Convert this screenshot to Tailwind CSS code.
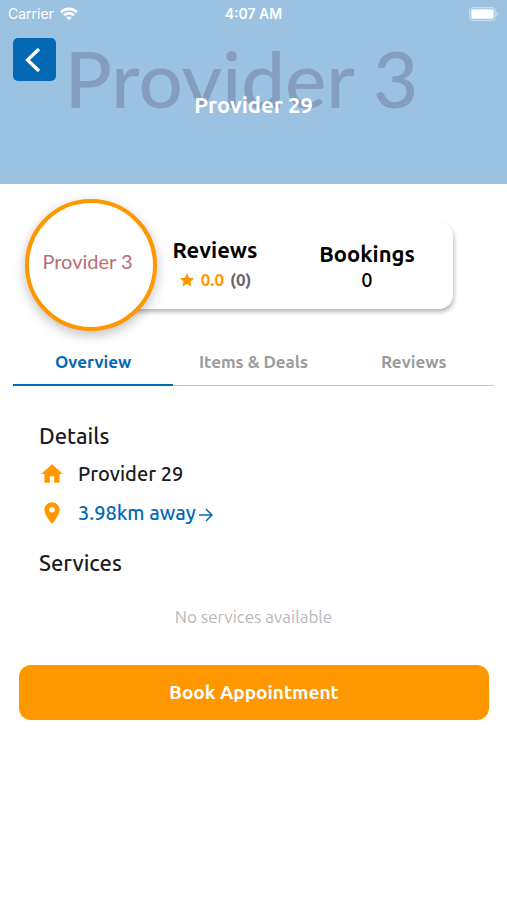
<!DOCTYPE html>
<html lang="en">
<head>
<meta charset="utf-8">
<meta name="viewport" content="width=device-width, initial-scale=1">
<title>Provider 29</title>
<script src="https://cdn.jsdelivr.net/npm/@tailwindcss/browser@4"></script>
</head>
<body class="min-h-screen bg-white font-['Ubuntu','Noto_Sans',sans-serif] text-[#1c1c1e]">
<header class="relative h-[184px] overflow-hidden bg-[#9bc2e1] text-white">
  <div aria-hidden="true" class="absolute inset-x-0 top-8 pr-6 text-center font-['Lato',sans-serif] text-[78px] leading-[92px] font-medium whitespace-nowrap text-[#859dbf]">Provider 3</div>
  <div class="relative grid h-7 grid-cols-3 items-center px-2 font-['Inter',sans-serif] text-sm">
    <div class="flex items-center gap-[6px]">
      <span>Carrier</span>
      <svg class="h-[14px] w-[18px]" viewBox="0 0 18 14" fill="none" stroke="currentColor" stroke-width="2.800" aria-hidden="true">
        <path d="M1 5.200C5.600.8 12.400.8 17 5.200"/>
        <path d="M4 8.300c2.900-2.700 7.100-2.700 10 0"/>
        <path d="M6.300 10.400c1.600-1.300 3.800-1.300 5.400 0L9 13.300z" fill="currentColor" stroke="none"/>
      </svg>
    </div>
    <span class="text-center font-semibold">4:07 AM</span>
    <svg class="h-[14px] w-[30px] justify-self-end" viewBox="0 0 30 14" aria-hidden="true">
      <rect x=".7" y=".7" width="25.600" height="12.600" rx="3.600" fill="none" stroke="#fff" stroke-opacity=".45" stroke-width="1.200"/>
      <rect x="2.300" y="2.300" width="22.400" height="9.400" rx="2" fill="#fff"/>
      <path d="M27.500 4.700c2 .8 2 3.800 0 4.600z" fill="#fff" fill-opacity=".5"/>
    </svg>
  </div>
  <button type="button" aria-label="Back" class="relative mt-[10px] ml-[13px] flex size-[43px] items-center justify-center rounded-[5px] bg-[#0369b5]">
    <svg class="size-6" viewBox="0 0 24 24" fill="none" stroke="currentColor" stroke-width="3.400" aria-hidden="true"><path d="M16 1 4.500 12 16 23"/></svg>
  </button>
  <h1 class="relative mt-[10px] text-center text-[22px] leading-7 font-semibold">Provider 29</h1>
</header>

<main>
  <section class="flex items-center pt-[15px] pr-[54px] pl-[25px]">
    <div class="relative z-10 flex size-[132px] shrink-0 items-center justify-center rounded-full border-4 border-[#ff9800] bg-white pr-[7px] pb-2 font-['Lato',sans-serif] text-xl text-[#b66f76] shadow-[0_4px_12px_rgba(0,0,0,0.25)]">Provider 3</div>
    <div class="-ml-16 flex h-[87px] grow rounded-[14px] bg-white pr-[10px] pl-[46px] shadow-[1px_3px_4px_rgba(0,0,0,0.28)]">
      <div class="flex flex-1 flex-col items-center pt-[14px]">
        <h2 class="text-[22px] leading-7 font-bold text-black">Reviews</h2>
        <p class="mt-1 flex items-center gap-[6px] text-[17px] leading-6 font-bold">
          <svg class="size-4" viewBox="0 0 24 24" fill="#ff9800" aria-hidden="true"><path d="m12 1.500 3.200 7 7.600.8-5.700 5.100 1.600 7.500-6.700-3.800-6.700 3.800 1.600-7.500L1.200 9.300l7.600-.8z"/></svg>
          <span class="text-[#ff9800]">0.0</span>
          <span class="text-[#666]">(0)</span>
        </p>
      </div>
      <div class="flex flex-1 flex-col items-center pt-[18px] text-black">
        <h2 class="text-[22px] leading-7 font-bold">Bookings</h2>
        <p class="text-xl leading-6 font-medium">0</p>
      </div>
    </div>
  </section>

  <nav class="mx-[13px] mt-[10px] grid grid-cols-3 border-b border-[#a9cbe6] text-center text-[17px] leading-6 font-bold text-[#9c9c9c]">
    <a href="#overview" aria-current="page" class="-mb-px border-b-2 border-[#0369b5] pt-[9px] pb-[10px] text-[#0369b5]">Overview</a>
    <a href="#items" class="pt-[9px] pb-[10px]">Items &amp; Deals</a>
    <a href="#reviews" class="pt-[9px] pb-[10px]">Reviews</a>
  </nav>

  <section id="overview" class="px-[39px] pt-9">
    <h2 class="text-[22px] leading-7 font-medium">Details</h2>
    <div class="mt-3 flex h-6 items-center gap-[13px] text-xl font-medium">
      <svg class="size-[26px]" viewBox="0 0 24 24" fill="#ff9800" aria-hidden="true"><path d="M10 20v-6h4v6h5v-8h3L12 3 2 12h3v8z"/></svg>
      <span>Provider 29</span>
    </div>
    <div class="mt-[15px] flex h-6 items-center gap-[13px] text-xl font-medium text-[#0369b5]">
      <svg class="size-[26px]" viewBox="0 0 24 24" fill="#ff9800" aria-hidden="true"><path d="M12 2C8.130 2 5 5.130 5 9c0 5.250 7 13 7 13s7-7.750 7-13c0-3.870-3.130-7-7-7zm0 9.500a2.500 2.500 0 0 1 0-5 2.500 2.500 0 0 1 0 5z"/></svg>
      <a href="#map" class="flex items-center gap-[3px]">3.98km away
        <svg class="mt-1 size-[14px]" viewBox="0 0 14 14" fill="none" stroke="currentColor" stroke-width="1.500" aria-hidden="true"><path d="M0 7h13M7 1l6 6-6 6"/></svg>
      </a>
    </div>
    <h2 class="mt-6 text-[22px] leading-7 font-medium">Services</h2>
    <p class="mt-7 text-center text-[17px] leading-6 text-[#b8b8b8]">No services available</p>
  </section>

  <div class="mt-9 pr-[18px] pl-[19px]">
    <button type="button" class="h-[55px] w-full rounded-xl bg-[#ff9800] text-[19px] font-semibold text-white">Book Appointment</button>
  </div>
</main>
</body>
</html>
